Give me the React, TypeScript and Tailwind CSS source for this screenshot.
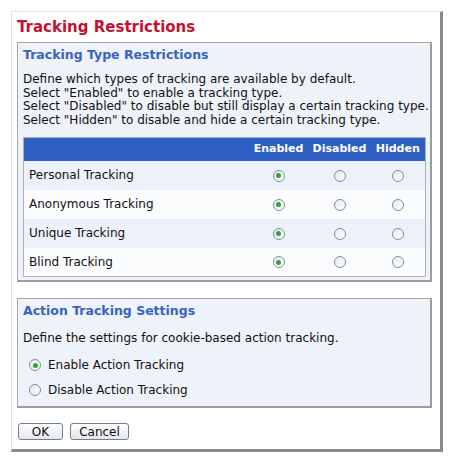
import React from 'react';

const rows = ['Personal Tracking', 'Anonymous Tracking', 'Unique Tracking', 'Blind Tracking'];

function Radio({ checked }: { checked?: boolean }) {
  return (
    <span className="inline-flex h-[12px] w-[12px] items-center justify-center rounded-full border border-[#7f8ea3] bg-gradient-to-br from-[#e6e9ee] to-white">
      {checked && <span className="h-[5px] w-[5px] rounded-full bg-[#2fa52f]" />}
    </span>
  );
}

export default function App() {
  return (
    <div className="h-[460px] w-[459px] bg-white pl-[11px] pt-[11px] font-['DejaVu_Sans',Verdana,sans-serif] text-[12px] text-[#111]">
      <div className="w-[432px] border border-[#e2e2e2] border-b-[3px] border-r-[3px] border-b-[#8a8a8a] border-r-[#8a8a8a] bg-white pb-[9px] pl-[5px] pr-[8px] pt-[5px]">
        <h1 className="text-[15px] font-bold leading-[20px] text-[#c3122f]">Tracking Restrictions</h1>

        {/* Tracking Type Restrictions */}
        <div className="mt-[5px] border border-[#a8a8a8] border-b-2 border-r-2 border-b-[#9c9c9c] border-r-[#9c9c9c] bg-[#eef2f9] px-[5px] pb-[3px] pt-[4px]">
          <h2 className="text-[12.5px] font-bold leading-[16px] text-[#3a62c2]">Tracking Type Restrictions</h2>
          <p className="mt-[10px] whitespace-nowrap leading-[13.5px]">
            Define which types of tracking are available by default.<br />
            Select "Enabled" to enable a tracking type.<br />
            Select "Disabled" to disable but still display a certain tracking type.<br />
            Select "Hidden" to disable and hide a certain tracking type.
          </p>
          <table className="mt-[10px] w-[403px] border border-[#a8b0bf] border-collapse">
            <thead>
              <tr className="h-[23px] bg-[#2f5fc3] text-[11px] font-bold text-white">
                <th className="w-[225px]" />
                <th className="w-[60px] text-center font-bold">Enabled</th>
                <th className="w-[62px] text-center font-bold">Disabled</th>
                <th className="text-center font-bold">Hidden</th>
              </tr>
            </thead>
            <tbody>
              {rows.map((r, i) => (
                <tr key={r} className={i % 2 === 0 ? 'h-[29px] bg-[#edf1f9]' : 'h-[29px] bg-[#fbfcfe]'}>
                  <td className="pl-[5px]">{r}</td>
                  <td className="text-center"><span className="inline-flex align-middle"><Radio checked /></span></td>
                  <td className="text-center"><span className="inline-flex align-middle"><Radio /></span></td>
                  <td className="text-center"><span className="inline-flex align-middle"><Radio /></span></td>
                </tr>
              ))}
            </tbody>
          </table>
        </div>

        {/* Action Tracking Settings */}
        <div className="mt-[16px] border border-[#a8a8a8] border-b-2 border-r-2 border-b-[#9c9c9c] border-r-[#9c9c9c] bg-[#eef2f9] px-[5px] pb-[9px] pt-[4px]">
          <h2 className="text-[12.5px] font-bold leading-[16px] text-[#3a62c2]">Action Tracking Settings</h2>
          <p className="mt-[12px] leading-[14px]">Define the settings for cookie-based action tracking.</p>
          <div className="mt-[13px] flex flex-col gap-[11px] pl-[6px]">
            <label className="flex items-center gap-[7px] leading-[14px]"><Radio checked />Enable Action Tracking</label>
            <label className="flex items-center gap-[7px] leading-[14px]"><Radio />Disable Action Tracking</label>
          </div>
        </div>

        <div className="mt-[15px] flex gap-[7px] pl-[1px]">
          <button className="h-[17px] w-[45px] rounded-[3px] border border-[#6f7f95] bg-gradient-to-b from-white to-[#e4e6ea] text-[12px] leading-[14px]">OK</button>
          <button className="h-[17px] w-[59px] rounded-[3px] border border-[#6f7f95] bg-gradient-to-b from-white to-[#e4e6ea] text-[12px] leading-[14px]">Cancel</button>
        </div>
      </div>
    </div>
  );
}
